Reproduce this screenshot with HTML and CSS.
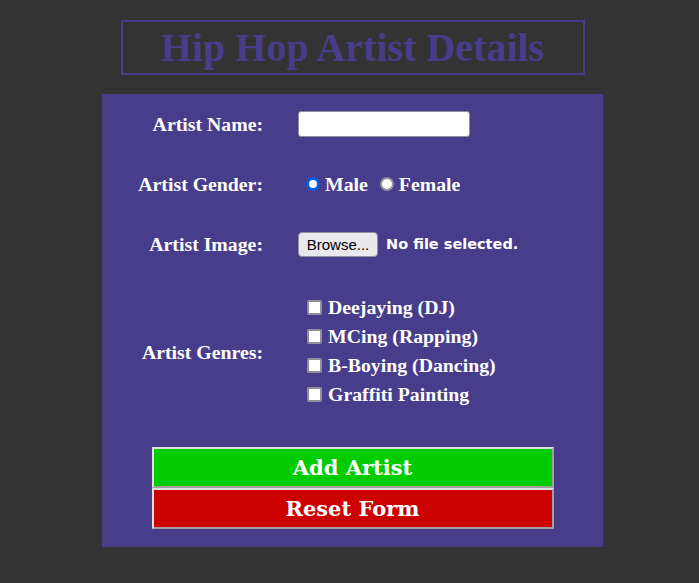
FILE: index.html
```html
<!DOCTYPE html>
<html lang="en">
<head>
<meta charset="utf-8">
<title>Hip Hop Artist Details</title>
<link rel="stylesheet" href="styles.css">
</head>
<body>
<div class="page">
  <h1 class="title">Hip Hop Artist Details</h1>
  <form class="panel">
    <div class="row">
      <label class="label" for="name">Artist Name:</label>
      <div class="field"><input class="text" id="name" type="text"></div>
    </div>
    <div class="row">
      <span class="label">Artist Gender:</span>
      <div class="field radios">
        <label class="opt"><input class="radio" type="radio" name="g" checked>Male</label>
        <label class="opt"><input class="radio" type="radio" name="g">Female</label>
      </div>
    </div>
    <div class="row">
      <span class="label">Artist Image:</span>
      <div class="field file">
        <span class="browse">Browse...</span>
        <span class="nofile">No file selected.</span>
      </div>
    </div>
    <div class="row genres">
      <span class="label">Artist Genres:</span>
      <div class="field checks">
        <label class="opt"><input class="check" type="checkbox">Deejaying (DJ)</label>
        <label class="opt"><input class="check" type="checkbox">MCing (Rapping)</label>
        <label class="opt"><input class="check" type="checkbox">B-Boying (Dancing)</label>
        <label class="opt"><input class="check" type="checkbox">Graffiti Painting</label>
      </div>
    </div>
    <div class="buttons">
      <button type="button" class="btn add">Add Artist</button>
      <button type="reset" class="btn reset">Reset Form</button>
    </div>
  </form>
</div>
</body>
</html>
```
FILE: styles.css
```css
html, body {
  margin: 0;
  padding: 0;
  background: #333333;
}
body {
  font-family: "Liberation Serif", "Times New Roman", serif;
  color: #fff;
}
.page {
  display: flex;
  flex-direction: column;
  align-items: center;
  padding-top: 20px;
}
.title {
  margin: 0 0 19px 6px;
  width: 460px;
  height: 51px;
  border: 2px solid #483d8b;
  color: #483d8b;
  font-size: 40px;
  font-weight: bold;
  line-height: 51px;
  text-align: center;
}
.panel {
  width: 501px;
  margin-left: 6px;
  background: #483d8b;
  display: flex;
  flex-direction: column;
  padding: 0 0 18px 0;
  box-sizing: border-box;
}
.row {
  display: grid;
  grid-template-columns: 161px 1fr;
  column-gap: 35px;
  align-items: center;
  height: 60px;
}
.row.genres {
  height: 156px;
}
.label {
  text-align: right;
  font-weight: bold;
  font-size: 19.8px;
}
.field {
  display: flex;
  align-items: center;
  font-weight: bold;
  font-size: 19.8px;
}
.text {
  width: 172px;
  height: 26px;
  box-sizing: border-box;
  border: 1px solid #8f8f9d;
  border-radius: 3px;
  background: #fff;
  margin: 0;
  padding: 0 4px;
}
.radios {
  gap: 12px;
  padding-left: 8px;
}
.opt {
  display: flex;
  align-items: center;
  gap: 5px;
}
.radio {
  appearance: none;
  margin: 0;
  width: 14px;
  height: 14px;
  border-radius: 50%;
  border: 2px solid #8f8f9d;
  background: #fff;
  box-sizing: border-box;
}
.radio:checked {
  border: 3px solid #0060df;
}
.file {
  gap: 8px;
}
.browse {
  display: inline-flex;
  align-items: center;
  justify-content: center;
  width: 80px;
  height: 25px;
  box-sizing: border-box;
  border: 1px solid #8f8f9d;
  border-radius: 4px;
  background: #e9e9ed;
  color: #000;
  font-family: "Liberation Sans", Arial, sans-serif;
  font-weight: normal;
  font-size: 15px;
}
.nofile {
  font-family: "DejaVu Sans", Verdana, sans-serif;
  font-weight: bold;
  font-size: 14.5px;
}
.checks {
  flex-direction: column;
  align-items: flex-start;
  gap: 9px;
  padding-left: 9px;
  margin-bottom: 2px;
}
.check {
  appearance: none;
  margin: 0;
  width: 15px;
  height: 15px;
  border: 2px solid #8f8f9d;
  border-radius: 2px;
  background: #fff;
  box-sizing: border-box;
}
.checks .opt {
  gap: 6px;
  height: 20px;
}
.buttons {
  display: flex;
  flex-direction: column;
  align-items: center;
  padding-top: 17px;
}
.btn {
  width: 402px;
  height: 41px;
  margin: 0;
  box-sizing: border-box;
  border: 2px solid;
  border-color: #e0e0e0 #a0a0a0 #a0a0a0 #e0e0e0;
  color: #fff;
  font-family: "DejaVu Serif", Georgia, serif;
  font-weight: bold;
  font-size: 21px;
  padding: 0;
}
.add {
  background: #00cc00;
}
.reset {
  background: #cc0000;
}
```
